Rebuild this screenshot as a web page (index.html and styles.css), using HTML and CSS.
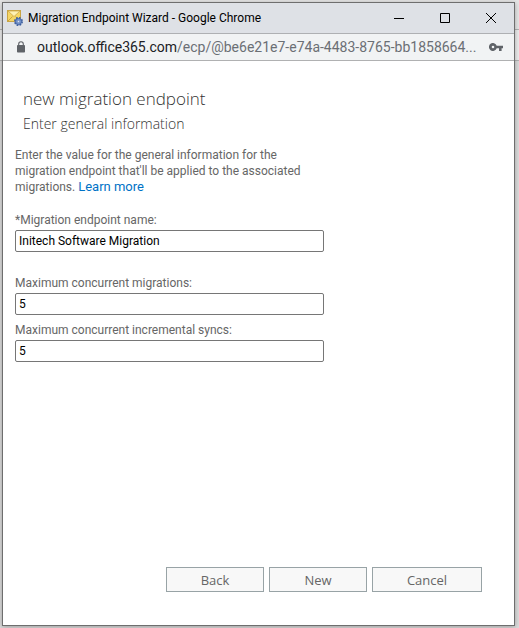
FILE: index.html
```html
<!DOCTYPE html>
<html lang="en">
<head>
    <meta charset="UTF-8">
    <meta name="viewport" content="width=device-width, initial-scale=1.0">
    <title>Migration Endpoint Wizard</title>
    <link rel="stylesheet" href="styles.css">
</head>
<body>
    <div class="window">
        <header class="titlebar">
            <svg class="app-icon" width="16" height="16" viewBox="0 0 16 16">
                <rect x="0.5" y="0.5" width="13" height="11" fill="#f5d665" stroke="#c9a544"/>
                <path d="M1 11l4.5-4.5M13 11L8.500 6.500" stroke="#cfa63c" fill="none"/>
                <path d="M1 1l6 5.500L13 1z" fill="#fff2b4" stroke="#cfa94a" stroke-width="0.8"/>
                <circle cx="11.5" cy="11.5" r="3.6" fill="#7c9bd0" stroke="#3f5f9e" stroke-width="1.800" stroke-dasharray="1.7 1.130"/>
                <circle cx="11.5" cy="11.5" r="2.9" fill="#7f9ed4" stroke="#3f5f9e" stroke-width="0.8"/>
                <circle cx="11.5" cy="11.5" r="1.2" fill="#dbe4f3" stroke="#3f5f9e" stroke-width="0.5"/>
            </svg>
            <span class="title">Migration Endpoint Wizard - Google Chrome</span>
            <div class="controls">
                <button type="button" aria-label="Minimize">
                    <svg width="10" height="10" viewBox="0 0 10 10"><path d="M0 5.5h10"/></svg>
                </button>
                <button type="button" aria-label="Maximize">
                    <svg width="10" height="10" viewBox="0 0 10 10"><path d="M.5.5h9v9h-9z"/></svg>
                </button>
                <button type="button" aria-label="Close">
                    <svg width="10" height="10" viewBox="0 0 10 10"><path d="M0 0l10 10M10 0L0 10"/></svg>
                </button>
            </div>
        </header>

        <div class="address">
            <svg class="lock" width="10" height="12" viewBox="0 0 10 12">
                <path d="M2.7 5V3a2.3 2.3 0 0 1 4.600 0V5" fill="none" stroke="#5f6368" stroke-width="1.1"/>
                <rect x="1" y="4" width="8" height="7.5" rx="0.8" fill="#5f6368"/>
            </svg>
            <span class="url">outlook.office365.com<span class="path">/ecp/@be6e21e7-e74a-4483-8765-bb1858664...</span></span>
            <svg class="key" width="14" height="8" viewBox="0 0 14 8">
                <path fill="#5f6368" fill-rule="evenodd" d="M7.7 2.7A4 4 0 1 0 7.7 5.3H10V8h2.6V5.3H14V2.7zM4 5.3a1.3 1.3 0 1 1 0-2.6 1.3 1.3 0 0 1 0 2.6z"/>
            </svg>
        </div>

        <form class="wizard">
            <h1>new migration endpoint</h1>
            <h2>Enter general information</h2>
            <p class="intro">Enter the value for the general information for the<br>migration endpoint that'll be applied to the associated<br>migrations. <a href="#">Learn more</a></p>

            <div class="field spaced">
                <label for="endpointName">*Migration endpoint name:</label>
                <input type="text" id="endpointName" value="Initech Software Migration">
            </div>
            <div class="field">
                <label for="maxMigrations">Maximum concurrent migrations:</label>
                <input type="text" id="maxMigrations" value="5">
            </div>
            <div class="field">
                <label for="maxSyncs">Maximum concurrent incremental syncs:</label>
                <input type="text" id="maxSyncs" value="5">
            </div>

            <div class="buttons">
                <button type="button">Back</button>
                <button type="button">New</button>
                <button type="button" class="wide">Cancel</button>
            </div>
        </form>
    </div>
</body>
</html>
```
FILE: styles.css
```css
* {
    box-sizing: border-box;
}

body {
    margin: 0;
    height: 100vh;
    padding: 2px 4px 2px 2px;
    display: flex;
    font-family: Roboto, "Open Sans", sans-serif;
    font-size: 12px;
    color: #666;
    background: linear-gradient(#e6e6e6 29px, #b4b4b4 29px, #b4b4b4 30px, #ececec 30px, #ececec 60px, #b4b4b4 60px, #b4b4b4 61px, #dcdcdc 61px);
}

.window {
    flex: 1;
    min-width: 0;
    display: flex;
    flex-direction: column;
    background-color: #fff;
    border: 1px solid #6e6e6e;
    box-shadow: 0 1px 5px rgba(0, 0, 0, 0.3);
}

.titlebar {
    display: flex;
    align-items: center;
    height: 31px;
    padding-left: 4px;
    background-color: #dee1e6;
    border-bottom: 1px solid #aeb0b3;
    color: #000;
}

.title {
    flex: 1;
    margin-left: 5px;
    white-space: nowrap;
}

.controls {
    display: flex;
    height: 100%;
}

.controls button {
    display: flex;
    align-items: center;
    justify-content: center;
    width: 46px;
    padding: 0;
    border: 0;
    background: none;
}

.controls path {
    fill: none;
    stroke: #000;
}

.address {
    display: flex;
    align-items: center;
    height: 27px;
    padding: 0 11px 0 13px;
    background-color: #f1f3f4;
    border-bottom: 1px solid #b0b1b2;
    font-size: 14px;
}

.url {
    flex: 1;
    min-width: 0;
    margin-left: 11px;
    overflow: hidden;
    white-space: nowrap;
    color: #202124;
}

.path {
    color: #6b6f74;
}

.wizard {
    flex: 1;
    display: flex;
    flex-direction: column;
    padding: 26px 32px 33px 12px;
}

h1,
h2 {
    margin: 0;
    padding-left: 8px;
    font-family: "Open Sans", sans-serif;
    font-weight: 300;
    color: #333;
}

h1 {
    font-size: 17px;
    line-height: 24px;
}

h2 {
    font-size: 14px;
    line-height: 26px;
}

.intro {
    margin: 10px 0 17px;
    line-height: 16px;
}

.intro a {
    font-size: 13px;
    color: #0072c6;
    text-decoration: none;
}

.field {
    display: flex;
    flex-direction: column;
    gap: 2px;
    width: 100%;
    max-width: 309px;
    margin-bottom: 7px;
}

.field.spaced {
    margin-bottom: 23px;
}

.field label {
    line-height: 16px;
}

.field input {
    height: 22px;
    padding: 0 3px;
    border: 1px solid #767676;
    border-radius: 2px;
    background-color: #fff;
    color: #000;
    font-family: inherit;
    font-size: 12px;
}

.buttons {
    display: flex;
    justify-content: flex-end;
    gap: 5px;
    margin-top: auto;
}

.buttons button {
    width: 98px;
    height: 25px;
    padding: 0;
    border: 1px solid #98a3a6;
    background-color: #f8f8f8;
    color: #666;
    font-family: "Open Sans", sans-serif;
    font-size: 13px;
}

.buttons .wide {
    width: 110px;
}
```
